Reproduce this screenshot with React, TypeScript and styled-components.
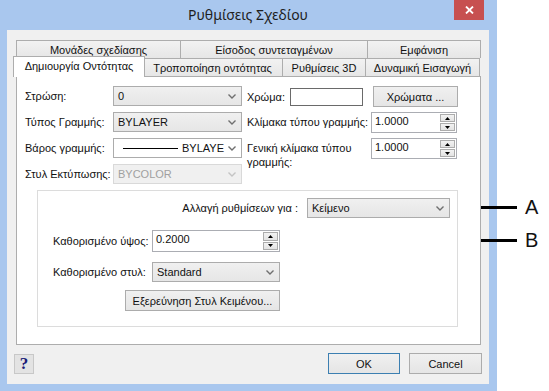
import React from "react";
import styled, { createGlobalStyle } from "styled-components";

const GlobalStyle = createGlobalStyle`
  html, body {
    margin: 0;
    padding: 0;
    background: #fff;
  }
  body {
    font-family: "Liberation Sans", Arial, sans-serif;
    font-size: 11px;
    color: #111;
  }
`;

const Page = styled.div`
  position: relative;
  width: 549px;
  height: 391px;
  overflow: hidden;
  background: #fff;
`;

const Window = styled.div`
  width: 497px;
  height: 391px;
  box-sizing: border-box;
  padding: 0 8px 7px 7px;
  background: #a9c7ee;
  display: flex;
  flex-direction: column;
`;

const TitleBar = styled.div`
  height: 30px;
  display: grid;
  grid-template-columns: 1fr auto 1fr;
  align-items: center;
`;

const Title = styled.div`
  grid-column: 2;
  font-family: "Noto Sans", "Open Sans", sans-serif;
  font-size: 14px;
  color: #1e1e1e;
  padding-bottom: 1px;
`;

const CloseButton = styled.div`
  grid-column: 3;
  justify-self: end;
  align-self: start;
  width: 30px;
  height: 20px;
  margin-right: 5px;
  background: #c75050;
  display: flex;
  align-items: center;
  justify-content: center;
`;

const Client = styled.div`
  flex: 1;
  background: #f0f0f0;
  display: flex;
  flex-direction: column;
  padding: 10px 8px 0 9px;
`;

const TabRow = styled.div`
  display: flex;
  height: 18px;
`;

const Tab = styled.div<{ $w: number; $active?: boolean }>`
  width: ${(p) => p.$w}px;
  box-sizing: border-box;
  border: 1px solid #adadad;
  border-left-width: 0;
  &:first-child {
    border-left-width: 1px;
  }
  border-bottom: none;
  background: linear-gradient(#f2f2f2, #e6e6e6);
  display: flex;
  align-items: center;
  justify-content: center;
  white-space: nowrap;
  ${(p) =>
    p.$active &&
    `
    position: relative;
    z-index: 2;
    background: #fff;
    width: ${p.$w + 4}px;
    margin: -2px -2px -1px -3px;
    height: 21px;
    border-left-width: 1px;
    padding-bottom: 2px;
  `}
`;

const Panel = styled.div`
  position: relative;
  z-index: 1;
  height: 269px;
  box-sizing: border-box;
  border: 1px solid #adadad;
  background: #fff;
  padding: 9px 0 0 8px;
`;

const TopSection = styled.div`
  display: flex;
  gap: 5px;
`;

const LeftGrid = styled.div`
  display: grid;
  grid-template-columns: 88px 129px;
  grid-auto-rows: 20px;
  row-gap: 6px;
  align-items: center;
`;

const Label = styled.span`
  white-space: nowrap;
`;

const RightCol = styled.div`
  display: flex;
  flex-direction: column;
  gap: 5px;
`;

const ColorRow = styled.div`
  display: flex;
  align-items: center;
  height: 21px;
`;

const ColorLabel = styled.span`
  width: 43px;
`;

const ColorSwatch = styled.div`
  width: 73px;
  height: 18px;
  box-sizing: border-box;
  border: 1px solid #6a6a6a;
  background: #fff;
  margin-right: 10px;
`;

const ScaleRow = styled.div`
  display: grid;
  grid-template-columns: 124px 86px;
  align-items: start;
`;

const WrapLabel = styled.span`
  line-height: 14px;
  padding-top: 3px;
`;

const ComboBox = styled.div<{ $w?: number; $kind?: "list" | "edit" | "disabled" }>`
  width: ${(p) => (p.$w ? `${p.$w}px` : "100%")};
  height: 20px;
  box-sizing: border-box;
  display: flex;
  align-items: center;
  padding: 0 5px 0 4px;
  border: 1px solid ${(p) => (p.$kind === "disabled" ? "#d9d9d9" : "#acacac")};
  background: ${(p) =>
    p.$kind === "edit"
      ? "#fff"
      : p.$kind === "disabled"
      ? "#f0f0f0"
      : "linear-gradient(#f0f0f0, #e6e6e6)"};
  color: ${(p) => (p.$kind === "disabled" ? "#a0a0a0" : "#111")};
  gap: 4px;
`;

const ComboText = styled.span`
  flex: 1;
  white-space: nowrap;
`;

const LineSample = styled.span`
  width: 55px;
  height: 1px;
  background: #000;
  margin-left: 5px;
`;

const Chevron: React.FC<{ light?: boolean }> = ({ light }) => (
  <svg width="8" height="5" viewBox="0 0 8 5">
    <polyline
      points="0.5,0.5 4,4 7.5,0.5"
      fill="none"
      stroke={light ? "#c4c4c4" : "#6f6f6f"}
      strokeWidth="1.4"
    />
  </svg>
);

const Combo: React.FC<{
  w?: number;
  kind?: "list" | "edit" | "disabled";
  children?: React.ReactNode;
}> = ({ w, kind = "list", children }) => (
  <ComboBox $w={w} $kind={kind}>
    {children}
    <Chevron light={kind === "disabled"} />
  </ComboBox>
);

const SpinBox = styled.div<{ $w: number; $h?: number }>`
  width: ${(p) => p.$w}px;
  height: ${(p) => p.$h ?? 21}px;
  box-sizing: border-box;
  border: 1px solid #abadb3;
  background: #fff;
  display: flex;
  align-items: flex-start;
  padding: 1px 1px 1px 3px;
`;

const SpinValue = styled.span`
  flex: 1;
  padding-top: 1px;
`;

const SpinButtons = styled.div`
  width: 15px;
  align-self: stretch;
  display: flex;
  flex-direction: column;
  gap: 1px;
`;

const SpinHalf = styled.div`
  flex: 1;
  box-sizing: border-box;
  border: 1px solid #acacac;
  background: linear-gradient(#f2f2f2, #e3e3e3);
  display: flex;
  align-items: center;
  justify-content: center;
`;

const Tri: React.FC<{ down?: boolean }> = ({ down }) => (
  <svg width="5" height="3" viewBox="0 0 5 3">
    <polygon points={down ? "0,0 5,0 2.5,3" : "0,3 5,3 2.5,0"} fill="#000" />
  </svg>
);

const Spin: React.FC<{ w: number; h?: number; value: string }> = ({ w, h, value }) => (
  <SpinBox $w={w} $h={h}>
    <SpinValue>{value}</SpinValue>
    <SpinButtons>
      <SpinHalf>
        <Tri />
      </SpinHalf>
      <SpinHalf>
        <Tri down />
      </SpinHalf>
    </SpinButtons>
  </SpinBox>
);

const Button = styled.div<{ $w: number; $h?: number; $default?: boolean }>`
  width: ${(p) => p.$w}px;
  height: ${(p) => p.$h ?? 21}px;
  box-sizing: border-box;
  border: 1px solid ${(p) => (p.$default ? "#3c7fb1" : "#acacac")};
  background: linear-gradient(#f0f0f0, #e5e5e5);
  display: flex;
  align-items: center;
  justify-content: center;
  white-space: nowrap;
`;

const GroupBox = styled.div`
  width: 421px;
  height: 137px;
  box-sizing: border-box;
  margin: 6px 0 0 12px;
  border: 1px solid #dcdcdc;
  padding: 7px 7px 0 15px;
  display: flex;
  flex-direction: column;
`;

const TargetRow = styled.div`
  display: flex;
  justify-content: flex-end;
  align-items: center;
  gap: 9px;
`;

const GroupGrid = styled.div`
  display: grid;
  grid-template-columns: 99px 128px;
  align-items: center;
  margin-top: 12px;
  row-gap: 10px;
`;

const GroupButton = styled(Button)`
  grid-column: 1 / 3;
  justify-self: end;
  margin-top: -2px;
`;

const Footer = styled.div`
  display: flex;
  align-items: center;
  padding: 8px 0 0 0;
  margin-left: -2px;
`;

const HelpButton = styled.div`
  width: 20px;
  height: 20px;
  box-sizing: border-box;
  border: 1px solid #c8c8c8;
  background: #e3e3e3;
  display: flex;
  align-items: center;
  justify-content: center;
  font-family: "Liberation Serif", "Times New Roman", serif;
  font-weight: bold;
  font-size: 17px;
  color: #1b1b78;
`;

const Spacer = styled.div`
  flex: 1;
`;

const FooterButtons = styled.div`
  display: flex;
  gap: 9px;
  margin-right: -1px;
`;

const Callout = styled.div<{ $top: number; $left: number }>`
  position: absolute;
  top: ${(p) => p.$top}px;
  left: ${(p) => p.$left}px;
  display: flex;
  align-items: center;
  gap: 8px;
`;

const CalloutLine = styled.div<{ $len: number }>`
  width: ${(p) => p.$len}px;
  height: 3px;
  background: #000;
`;

const CalloutLetter = styled.span`
  font-family: "Liberation Sans", Arial, sans-serif;
  font-size: 20px;
  line-height: 20px;
`;

const App: React.FC = () => {
  return (
    <Page>
      <GlobalStyle />
      <Window>
        <TitleBar>
          <Title>Ρυθμίσεις Σχεδίου</Title>
          <CloseButton>
            <svg width="9" height="8" viewBox="0 0 9 8">
              <path d="M1 0.5 L8 7.5 M8 0.5 L1 7.5" stroke="#fff" strokeWidth="1.8" />
            </svg>
          </CloseButton>
        </TitleBar>
        <Client>
          <TabRow>
            <Tab $w={165}>Μονάδες σχεδίασης</Tab>
            <Tab $w={187}>Είσοδος συντεταγμένων</Tab>
            <Tab $w={113}>Εμφάνιση</Tab>
          </TabRow>
          <TabRow>
            <Tab $w={128} $active>
              Δημιουργία Οντότητας
            </Tab>
            <Tab $w={140}>Τροποποίηση οντότητας</Tab>
            <Tab $w={83}>Ρυθμίσεις 3D</Tab>
            <Tab $w={114}>Δυναμική Εισαγωγή</Tab>
          </TabRow>
          <Panel>
            <TopSection>
              <LeftGrid>
                <Label>Στρώση:</Label>
                <Combo>
                  <ComboText>0</ComboText>
                </Combo>
                <Label>Τύπος Γραμμής:</Label>
                <Combo>
                  <ComboText>BYLAYER</ComboText>
                </Combo>
                <Label>Βάρος γραμμής:</Label>
                <Combo kind="edit">
                  <LineSample />
                  <ComboText>BYLAYE</ComboText>
                </Combo>
                <Label>Στυλ Εκτύπωσης:</Label>
                <Combo kind="disabled">
                  <ComboText>BYCOLOR</ComboText>
                </Combo>
              </LeftGrid>
              <RightCol>
                <ColorRow>
                  <ColorLabel>Χρώμα:</ColorLabel>
                  <ColorSwatch />
                  <Button $w={85}>Χρώματα ...</Button>
                </ColorRow>
                <ScaleRow>
                  <WrapLabel>Κλίμακα τύπου γραμμής:</WrapLabel>
                  <Spin w={86} value="1.0000" />
                </ScaleRow>
                <ScaleRow>
                  <WrapLabel>Γενική κλίμακα τύπου γραμμής:</WrapLabel>
                  <Spin w={86} value="1.0000" />
                </ScaleRow>
              </RightCol>
            </TopSection>
            <GroupBox>
              <TargetRow>
                <Label>Αλλαγή ρυθμίσεων για :</Label>
                <Combo w={143}>
                  <ComboText>Κείμενο</ComboText>
                </Combo>
              </TargetRow>
              <GroupGrid>
                <Label>Καθορισμένο ύψος:</Label>
                <Spin w={128} h={22} value="0.2000" />
                <Label>Καθορισμένο στυλ:</Label>
                <Combo w={128}>
                  <ComboText>Standard</ComboText>
                </Combo>
                <GroupButton $w={155}>Εξερεύνηση Στυλ Κειμένου...</GroupButton>
              </GroupGrid>
            </GroupBox>
          </Panel>
          <Footer>
            <HelpButton>?</HelpButton>
            <Spacer />
            <FooterButtons>
              <Button $w={72} $default>
                OK
              </Button>
              <Button $w={73}>Cancel</Button>
            </FooterButtons>
          </Footer>
        </Client>
      </Window>
      <Callout $top={197} $left={452}>
        <CalloutLine $len={65} />
        <CalloutLetter>A</CalloutLetter>
      </Callout>
      <Callout $top={230} $left={283}>
        <CalloutLine $len={234} />
        <CalloutLetter>B</CalloutLetter>
      </Callout>
    </Page>
  );
};

export default App;
